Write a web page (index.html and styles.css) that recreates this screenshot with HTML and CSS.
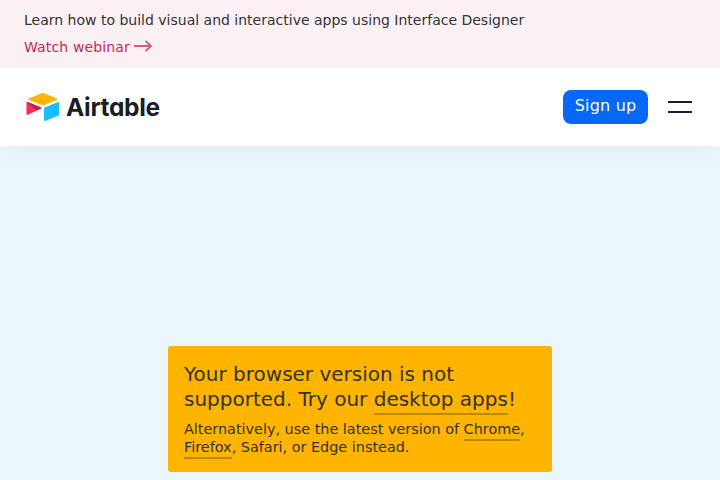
FILE: index.html
```html
<!DOCTYPE html>
<html lang="en">
<head>
<meta charset="utf-8">
<title>Airtable</title>
<link rel="stylesheet" href="styles.css">
</head>
<body>
<aside class="promo">
  <p class="promo-text">Learn how to build visual and interactive apps using Interface Designer</p>
  <a class="promo-link" href="#"><span>Watch webinar</span><svg class="arrow" width="18" height="12" viewBox="0 0 18 12" fill="none" stroke="currentColor" stroke-width="1.8"><path d="M0 6H17M11.5 .8L17 6L11.5 11.2"/></svg></a>
</aside>
<header class="header">
  <a class="brand" href="#">
    <svg width="34" height="30" viewBox="0 0 34 30">
      <path fill="#fcb400" d="M15.1 1.4L3 6.400c-.7.3-.7 1.200 0 1.500l12.200 4.800c1.100.4 2.300.4 3.400 0l12.200-4.800c.7-.3.7-1.200 0-1.500L18.500 1.400c-1.100-.5-2.300-.5-3.400 0z"/>
      <path fill="#18bfff" d="M18 16.100v12c0 .6.6 1 1.100.8l13.600-5.300c.4-.1.600-.4.600-.7v-12c0-.6-.6-1-1.100-.8L18.500 15.400c-.3.100-.5.400-.5.700z"/>
      <path fill="#f82b60" d="M14.800 16.700L2 22.800c-.6.300-1.500 0-1.500-.7V10.700c0-.8.800-1 1.500-.7l12.700 5.300c.7.300.7 1.100.1 1.400z"/>
      <path fill="#000" fill-opacity=".25" d="M14.800 16.700l-4 1.900L.7 10.100c.3-.3.800-.3 1.300-.1l12.700 5.300c.7.300.7 1.100.1 1.400z"/>
    </svg>
    <span class="wordmark">Airtable</span>
  </a>
  <nav class="actions">
    <a class="signup" href="#">Sign up</a>
    <button class="menu" aria-label="Menu"><i></i><i></i></button>
  </nav>
</header>
<main class="stage">
  <section class="notice">
    <h1>Your browser version is not supported. Try our <a href="#">desktop apps</a>!</h1>
    <p>Alternatively, use the latest version of <a href="#">Chrome</a>, <a href="#">Firefox</a>, Safari, or Edge instead.</p>
  </section>
</main>
</body>
</html>
```
FILE: styles.css
```css
* { box-sizing: border-box; }
body {
  margin: 0;
  height: 480px;
  overflow: hidden;
  display: flex;
  flex-direction: column;
  background: #ebf7fd;
  color: #333;
  font-family: "DejaVu Sans", sans-serif;
}
a { color: inherit; text-decoration: none; }
p, h1 { margin: 0; font-weight: 400; }
.promo {
  position: relative;
  z-index: 1;
  height: 68px;
  padding: 10px 24px 0;
  background: #fbf1f5;
  font-size: 14px;
  line-height: 21px;
}
.promo-link {
  display: flex;
  align-items: center;
  gap: 4px;
  margin-top: 6px;
  color: #ce2453;
  letter-spacing: .14px;
}
.arrow { opacity: .75; margin-top: -3px; }
.header {
  height: 78px;
  padding: 0 28px 0 26px;
  display: flex;
  align-items: center;
  justify-content: space-between;
  background: #fff;
  box-shadow: 0 0 32px rgba(0, 40, 70, .06);
}
.brand { display: flex; align-items: center; gap: 6px; }
.wordmark {
  color: #181d26;
  font: 700 24.5px/30px Inter, sans-serif;
  font-feature-settings: "cv11";
  letter-spacing: -.3px;
}
.actions { display: flex; align-items: center; gap: 20px; }
.signup {
  width: 85px;
  height: 34px;
  border-radius: 8px;
  background: #0768f8;
  color: #fff;
  font-size: 16px;
  line-height: 31px;
  letter-spacing: .2px;
  text-align: center;
}
.menu {
  width: 24px;
  padding: 0;
  border: 0;
  background: none;
  display: flex;
  flex-direction: column;
  gap: 8px;
}
.menu i { width: 24px; height: 2px; background: #181d26; }
.stage { flex: 1; display: flex; flex-direction: column; align-items: center; justify-content: flex-end; padding-bottom: 8px; }
.notice {
  width: 384px;
  height: 126px;
  padding: 16px;
  border-radius: 3px;
  background: #ffb400;
}
.notice h1 { font-size: 20px; line-height: 25px; }
.notice p { margin-top: 8px; font-size: 14.4px; line-height: 18px; }
.notice a { padding-bottom: 2px; border-bottom: 2px solid rgba(0, 0, 0, .25); }
```
